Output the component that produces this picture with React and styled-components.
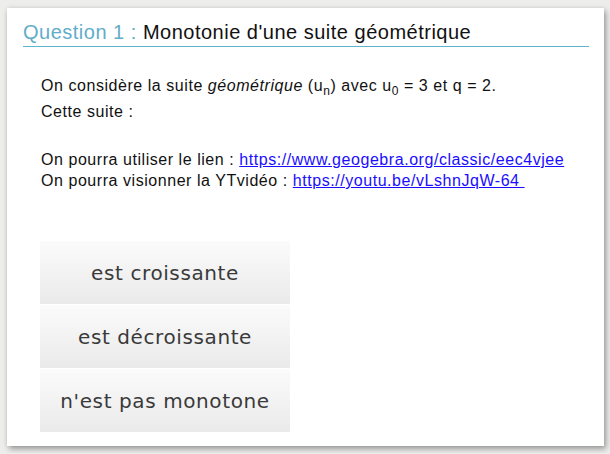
import React from 'react';
import styled, { createGlobalStyle } from 'styled-components';

const GlobalStyle = createGlobalStyle`
  html, body {
    margin: 0;
    background: #ededeb;
  }
  body {
    padding: 8px 6px 7px 7px;
    font-family: "Liberation Sans", Arial, sans-serif;
  }
`;

const Card = styled.div`
  background: #fff;
  padding: 13px 15px 14px 16px;
  box-shadow: 2px 3px 6px rgba(0, 0, 0, 0.35), 0 0 4px rgba(0, 0, 0, 0.08);
`;

const Heading = styled.h2`
  margin: 0;
  font-size: 20px;
  letter-spacing: 0.5px;
  font-weight: normal;
  line-height: 23px;
  padding-bottom: 2px;
  border-bottom: 1px solid #5db2cc;
  color: #111;
`;

const Label = styled.span`
  color: #62adc9;
`;

const Statement = styled.div`
  padding-left: 18px;
  font-size: 16px;
  letter-spacing: 0.55px;
  color: #111;
`;

const Line = styled.div`
  line-height: ${(p) => p.$lh || 20}px;
  margin-top: ${(p) => p.$gap || 0}px;
`;

const Sub = styled.sub`
  font-size: 12px;
  vertical-align: -4px;
  line-height: 0;
`;

const Link = styled.a`
  color: #1a0dff;
  text-decoration: underline;
`;

const Choices = styled.div`
  display: flex;
  flex-direction: column;
  gap: 1px;
  width: 250px;
  margin: 50px 0 0 17px;
`;

const Choice = styled.button`
  height: 63px;
  border: none;
  padding: 0;
  background: linear-gradient(to bottom, #fbfbfb, #eaeaea);
  font-family: "DejaVu Sans", sans-serif;
  font-size: 20px;
  letter-spacing: 0.6px;
  color: #3a3a3a;
  cursor: pointer;
`;

const answers = ['est croissante', 'est décroissante', "n'est pas monotone"];

export default function App() {
  return (
    <>
      <GlobalStyle />
      <Card>
        <Heading>
          <Label>Question 1 : </Label>Monotonie d'une suite géométrique
        </Heading>
        <Statement>
          <Line $gap={29}>
            On considère la suite <i>géométrique</i> (u<Sub>n</Sub>) avec u<Sub>0</Sub> = 3 et q = 2.
          </Line>
          <Line $gap={6}>Cette suite :</Line>
          <Line $gap={27} $lh={21}>
            On pourra utiliser le lien :{' '}
            <Link href="#">https://www.geogebra.org/classic/eec4vjee</Link>
          </Line>
          <Line $lh={21}>
            On pourra visionner la YTvidéo :{' '}
            <Link href="#">https://youtu.be/vLshnJqW-64&nbsp;</Link>
          </Line>
        </Statement>
        <Choices>
          {answers.map((a) => (
            <Choice key={a}>{a}</Choice>
          ))}
        </Choices>
      </Card>
    </>
  );
}
